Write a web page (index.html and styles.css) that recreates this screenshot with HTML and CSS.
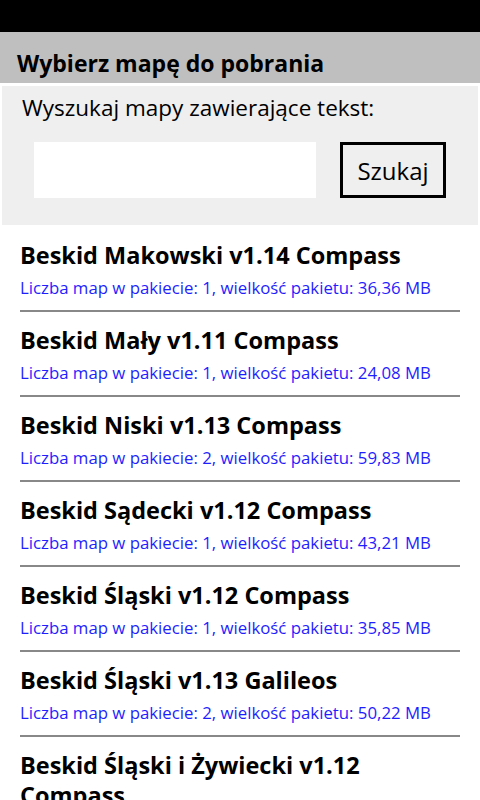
FILE: index.html
```html
<!DOCTYPE html>
<html lang="pl">
<head>
<meta charset="utf-8">
<title>Wybierz mapę</title>
<link rel="stylesheet" href="styles.css">
</head>
<body>
<div class="status"></div>
<div class="header">Wybierz mapę do pobrania</div>
<div class="search">
  <div class="search-label">Wyszukaj mapy zawierające tekst:</div>
  <div class="search-row">
    <div class="input"></div>
    <div class="button">Szukaj</div>
  </div>
</div>
<ul class="list">
  <li class="item"><div class="name">Beskid Makowski v1.14 Compass</div><div class="info">Liczba map w pakiecie: 1, wielkość pakietu: 36,36 MB</div></li>
  <li class="item"><div class="name">Beskid Mały v1.11 Compass</div><div class="info">Liczba map w pakiecie: 1, wielkość pakietu: 24,08 MB</div></li>
  <li class="item"><div class="name">Beskid Niski v1.13 Compass</div><div class="info">Liczba map w pakiecie: 2, wielkość pakietu: 59,83 MB</div></li>
  <li class="item"><div class="name">Beskid Sądecki v1.12 Compass</div><div class="info">Liczba map w pakiecie: 1, wielkość pakietu: 43,21 MB</div></li>
  <li class="item"><div class="name">Beskid Śląski v1.12 Compass</div><div class="info">Liczba map w pakiecie: 1, wielkość pakietu: 35,85 MB</div></li>
  <li class="item"><div class="name">Beskid Śląski v1.13 Galileos</div><div class="info">Liczba map w pakiecie: 2, wielkość pakietu: 50,22 MB</div></li>
  <li class="item"><div class="name">Beskid Śląski i Żywiecki v1.12 Compass</div><div class="info">Liczba map w pakiecie: 1, wielkość pakietu: 40,00 MB</div></li>
</ul>
</body>
</html>
```
FILE: styles.css
```css
html, body {
  margin: 0;
  padding: 0;
  background: #ffffff;
  height: 800px;
  overflow: hidden;
}
body {
  font-family: "Open Sans", "Noto Sans", sans-serif;
  color: #000;
}
.status {
  height: 32px;
  background: #000;
}
.header {
  height: 51px;
  background: #bfbfbf;
  box-sizing: border-box;
  padding: 16px 0 0 17px;
  font-size: 23px;
  font-weight: 700;
  line-height: 30px;
}
.search {
  margin: 3px 2px 0 2px;
  height: 139px;
  background: #efefef;
  box-sizing: border-box;
  padding: 7px 0 0 20px;
}
.search-label {
  font-size: 22.5px;
  line-height: 30px;
}
.search-row {
  display: flex;
  margin-top: 19px;
  padding-left: 12px;
  gap: 24px;
}
.input {
  width: 282px;
  height: 56px;
  background: #fff;
}
.button {
  width: 106px;
  height: 56px;
  box-sizing: border-box;
  border: 3px solid #000;
  display: flex;
  align-items: center;
  justify-content: center;
  font-size: 24px;
}
.list {
  list-style: none;
  margin: 2px 20px 0 20px;
  padding: 0;
}
.item {
  padding: 13px 0 10px 0;
  border-bottom: 2px solid #888888;
}
.name {
  font-size: 23.5px;
  font-weight: 700;
  line-height: 30px;
}
.info {
  margin-top: 6px;
  font-size: 16.8px;
  line-height: 24px;
  color: #1e1eff;
}
```
